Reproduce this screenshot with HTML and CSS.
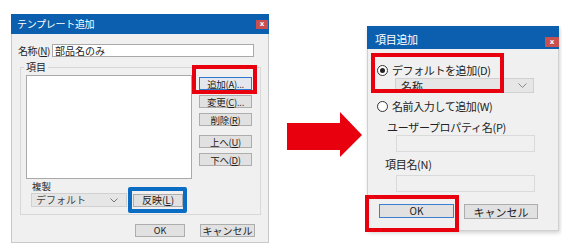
FILE: index.html
```html
<!DOCTYPE html>
<html lang="ja">
<head>
<meta charset="utf-8">
<link rel="stylesheet" href="styles.css">
</head>
<body>
<div class="scene">
  <div class="dlg dlg-left">
    <div class="titlebar tb-left">
      <span class="title">テンプレート追加</span>
      <span class="close close-left">x</span>
    </div>
    <div class="name-row">
      <span class="lbl">名称(<u>N</u>)</span>
      <div class="textbox name-input">部品名のみ</div>
    </div>
    <div class="group">
      <span class="legend">項目</span>
      <div class="group-main">
        <div class="listbox"></div>
        <div class="btn-col">
          <div class="btn btn-focus">追加(<u>A</u>)...</div>
          <div class="btn">変更(<u>C</u>)...</div>
          <div class="btn">削除(<u>R</u>)</div>
          <div class="btn btn-gap">上へ(<u>U</u>)</div>
          <div class="btn">下へ(<u>D</u>)</div>
        </div>
      </div>
      <div class="copy-label">複製</div>
      <div class="copy-row">
        <div class="combo combo-left"><span>デフォルト</span><svg class="chev" width="8" height="5" viewBox="0 0 8 5"><path d="M0.5 0.5 L4 4 L7.5 0.5" fill="none" stroke="#777" stroke-width="1"/></svg></div>
        <div class="btn btn-apply">反映(<u>L</u>)</div>
      </div>
    </div>
    <div class="footer footer-left">
      <div class="btn btn-ok-l">OK</div>
      <div class="btn btn-cancel-l">キャンセル</div>
    </div>
    <div class="mark red mark-add"></div>
    <div class="mark blue mark-apply"></div>
  </div>

  <svg class="arrow" width="78" height="48" viewBox="0 0 78 48">
    <polygon points="0,11 53,11 53,0 75,23 53,45 53,38 0,38" fill="#e8000f"/>
  </svg>

  <div class="dlg dlg-right">
    <div class="titlebar tb-right">
      <span class="title title-r">項目追加</span>
      <span class="close close-right">x</span>
    </div>
    <div class="radio-row r1">
      <span class="radio on"><span class="dot"></span></span>
      <span class="rtext">デフォルトを追加(D)</span>
    </div>
    <div class="combo combo-right"><span>名称</span><svg class="chev" width="9" height="5" viewBox="0 0 9 5"><path d="M0.5 0.5 L4.5 4.5 L8.5 0.5" fill="none" stroke="#888" stroke-width="1"/></svg></div>
    <div class="radio-row r2">
      <span class="radio"></span>
      <span class="rtext">名前入力して追加(W)</span>
    </div>
    <div class="r-label lp">ユーザープロパティ名(P)</div>
    <div class="r-input"></div>
    <div class="r-label ln">項目名(N)</div>
    <div class="r-input"></div>
    <div class="footer footer-right">
      <div class="btn btn-ok-r">OK</div>
      <div class="btn btn-cancel-r">キャンセル</div>
    </div>
    <div class="mark red mark-default"></div>
    <div class="mark red mark-ok"></div>
  </div>
</div>
</body>
</html>
```

FILE: styles.css
```css
* { box-sizing: border-box; }
html, body {
  margin: 0;
  padding: 0;
  background: #ffffff;
}
body {
  width: 562px;
  height: 249px;
  overflow: hidden;
  font-family: "Noto Sans CJK JP", "Noto Sans", sans-serif;
  color: #222;
}
.scene {
  display: flex;
  align-items: flex-start;
}
u { text-decoration: underline; text-underline-offset: 1px; }

.dlg {
  position: relative;
  background: #f0f0f0;
}
.dlg-left {
  width: 258px;
  height: 229px;
  margin: 14px 0 0 11px;
  border: 1px solid #c9c9c9;
  border-top: 0;
  font-size: 10px;
  line-height: 12px;
}
.dlg-right {
  width: 192px;
  height: 205px;
  margin: 26px 0 0 2px;
  border: 1px solid #d0d0d0;
  border-top: 0;
  box-shadow: 1px 2px 4px rgba(0,0,0,0.18);
  font-size: 11px;
  line-height: 12px;
}

.titlebar {
  position: relative;
  background: #0b5fae;
  color: #fff;
  display: flex;
  align-items: center;
}
.tb-left { height: 20px; margin: 0 -1px; padding-left: 6px; }
.tb-right { height: 23px; margin: 0 -1px; padding-left: 8px; align-items: flex-start; padding-top: 7px; }
.title { font-size: 10px; letter-spacing: -0.3px; }
.title-r { font-size: 11px; }
.close {
  position: absolute;
  background: #c8504f;
  color: #fff;
  font-size: 7px;
  line-height: 9px;
  text-align: center;
  font-family: "DejaVu Sans", sans-serif;
  font-weight: bold;
}
.close-left { right: 1px; top: 6px; width: 12px; height: 9px; }
.close-right { right: 0; top: 11px; width: 14px; height: 10px; line-height: 10px; }

/* left dialog */
.name-row {
  display: flex;
  align-items: center;
  margin-top: 10px;
  height: 13px;
}
.lbl { width: 34px; margin-left: 6px; letter-spacing: -0.4px; }
.textbox {
  background: #fff;
  border: 1px solid #a9a9a9;
  height: 13px;
  padding-left: 2px;
  line-height: 11px;
}
.name-input { width: 202px; }

.group {
  position: relative;
  margin: 10px 0 0 8px;
  width: 241px;
  border: 1px solid #d8d8d8;
  padding: 7px 8px 7px 5px;
}
.legend {
  position: absolute;
  top: -7px;
  left: 3px;
  padding: 0 2px;
  background: #f0f0f0;
}
.group-main {
  display: flex;
  gap: 7px;
}
.listbox {
  width: 166px;
  height: 104px;
  background: #fff;
  border: 1px solid #a9a9a9;
}
.btn-col {
  display: flex;
  flex-direction: column;
  gap: 5px;
  padding-top: 2px;
}
.btn {
  background: #e1e1e1;
  border: 1px solid #adadad;
  display: flex;
  align-items: center;
  justify-content: center;
  white-space: nowrap;
}
.btn-col .btn { width: 53px; height: 13px; font-size: 9.5px; letter-spacing: -0.3px; }
.btn-focus { border-color: #2b78cf; background: #e4e8ee; }
.btn-gap { margin-top: 4px; }

.copy-label { margin: 0 0 0 6px; height: 14px; line-height: 14px; font-size: 9.5px; }
.copy-row {
  display: flex;
  align-items: center;
  gap: 6px;
  margin-left: 5px;
}
.combo {
  display: flex;
  align-items: center;
  justify-content: space-between;
  background: #e6e6e6;
  border: 1px solid #d0d0d0;
}
.combo-left { width: 96px; height: 14px; padding: 0 8px 0 4px; color: #444; }
.btn-apply { width: 50px; height: 13px; }

.footer { display: flex; }
.footer-left { margin: 9px 0 0 123px; gap: 15px; }
.btn-ok-l { width: 50px; height: 13px; font-size: 9px; }
.btn-cancel-l { width: 55px; height: 13px; }

/* right dialog */
.radio-row {
  display: flex;
  align-items: center;
  gap: 4px;
  margin-left: 9px;
  height: 12px;
}
.rtext { letter-spacing: -0.4px; line-height: 12px; }
.r1 { margin-top: 15px; }
.r2 { margin-top: 7px; }
.radio {
  width: 11px;
  height: 11px;
  border-radius: 50%;
  border: 1px solid #333;
  background: #fff;
  display: flex;
  align-items: center;
  justify-content: center;
  flex: none;
}
.dot { width: 5px; height: 5px; border-radius: 50%; background: #222; }
.combo-right {
  margin: 2px 0 0 27px;
  width: 139px;
  height: 15px;
  padding: 0 6px 0 5px;
}
.r-label { height: 12px; letter-spacing: -0.3px; }
.lp { margin: 9px 0 0 19px; }
.ln { margin: 6px 0 0 17px; }
.r-input {
  margin: 2px 0 0 28px;
  width: 139px;
  height: 17px;
  background: #f0f0f0;
  border: 1px solid #dadada;
}
.ln + .r-input { margin-top: 5px; }
.footer-right { margin: 12px 0 0 11px; gap: 10px; }
.btn-ok-r { width: 75px; height: 14px; border-color: #3a80d2; font-size: 10px; }
.btn-cancel-r { width: 74px; height: 15px; }

/* annotation marks */
.mark {
  position: absolute;
  border: 4px solid #e8000f;
  pointer-events: none;
}
.mark.blue { border-color: #0a6cc2; border-radius: 2px; }
.mark-add { left: 180px; top: 51px; width: 65px; height: 29px; }
.mark-apply { left: 116px; top: 173px; width: 59px; height: 26px; }
.mark-default { left: 3px; top: 27px; width: 133px; height: 40px; }
.mark-ok { left: -3px; top: 169px; width: 94px; height: 37px; }

.arrow { margin: 112px 0 0 18px; flex: none; }
```
